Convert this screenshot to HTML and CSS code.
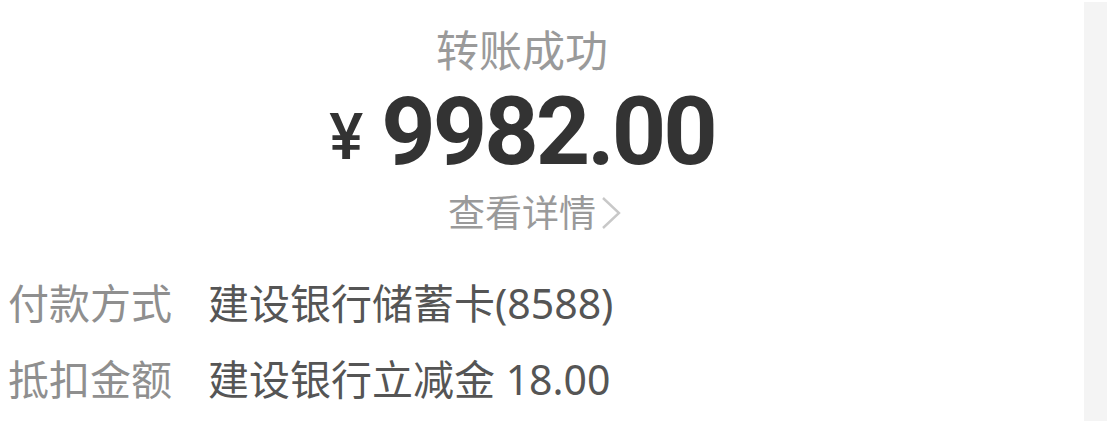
FILE: index.html
```html
<!DOCTYPE html>
<html lang="zh-CN">
<head>
<meta charset="utf-8">
<title>转账成功</title>
<link rel="stylesheet" href="styles.css">
</head>
<body>
<div class="page">
  <main class="main">
    <div class="head">
      <div class="status">转账成功</div>
      <div class="amount"><span class="yen">¥</span><span class="num">9982.00</span></div>
      <div class="detail">查看详情<svg class="chev" viewBox="0 0 22 36" width="22" height="36"><path d="M3 3 L19 18 L3 33" fill="none" stroke="#c8c8c8" stroke-width="2.4"/></svg></div>
    </div>
    <div class="rows">
      <div class="row"><span class="label">付款方式</span><span class="value">建设银行储蓄卡(8588)</span></div>
      <div class="row"><span class="label">抵扣金额</span><span class="value">建设银行立减金 18.00</span></div>
    </div>
  </main>
  <aside class="strip"></aside>
</div>
</body>
</html>
```
FILE: styles.css
```css
html, body {
  margin: 0;
  background: #ffffff;
  font-family: "Noto Sans", "Noto Sans CJK SC", sans-serif;
}
.page {
  display: flex;
  height: 423px;
}
.main {
  flex: 1;
  padding-right: 40px;
  display: flex;
  flex-direction: column;
}
.head {
  display: flex;
  flex-direction: column;
  align-items: center;
  padding-top: 23px;
}
.status {
  font-size: 43px;
  line-height: 56px;
  color: #9a9a9a;
}
.amount {
  display: flex;
  align-items: baseline;
  color: #333333;
  line-height: 96px;
  margin-top: 5px;
}
.yen {
  font-family: "Roboto", sans-serif;
  font-size: 64px;
  font-weight: 500;
  margin-right: 18px;
  position: relative;
  top: -5px;
}
.num {
  font-family: "Roboto", sans-serif;
  font-weight: 700;
  font-size: 95px;
  letter-spacing: -3px;
}
.detail {
  display: flex;
  align-items: center;
  font-size: 37px;
  line-height: 48px;
  color: #9a9a9a;
  margin-top: -2px;
}
.chev {
  margin-left: 4px;
  margin-right: -26px;
}
.rows {
  display: flex;
  flex-direction: column;
  padding-left: 8px;
  margin-top: 39px;
  gap: 22px;
}
.row {
  display: flex;
  font-size: 41px;
  line-height: 54px;
}
.label {
  color: #8f8f8f;
  width: 200px;
}
.value {
  color: #555555;
}
.strip {
  width: 23px;
  margin: 2px 2px 2px 0;
  background: #f4f4f4;
}
```
